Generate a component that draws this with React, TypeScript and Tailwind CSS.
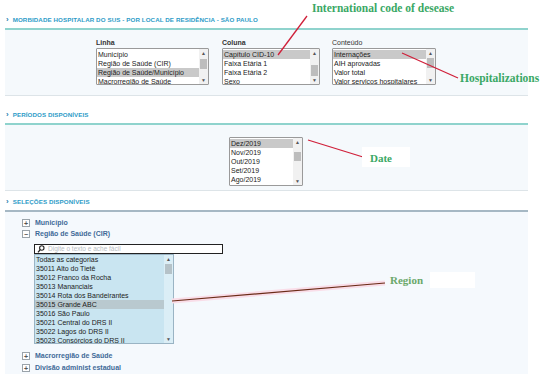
import React from 'react';

type ListProps = {
  items: string[];
  selected?: number;
  className: string;
  thumb: string;
  rowH?: string;
};

const ListBox: React.FC<ListProps> = ({ items, selected, className, thumb, rowH = 'h-[9px]' }) => {
  return (
    <div className={`flex overflow-hidden border border-[#9a9a9a] bg-white rounded-[1px] ${className}`}>
      <div className="flex-1 overflow-hidden pt-[1px]">
        {items.map((it, i) => (
          <div
            key={it}
            className={`${rowH} pl-[1px] leading-[9px] whitespace-nowrap ${i === selected ? 'bg-[#c9c9c9]' : ''}`}
          >
            {it}
          </div>
        ))}
      </div>
      <div className="relative w-[9px] bg-[#f1f1f1] flex flex-col items-center justify-between">
        <span className="text-[5px] leading-[8px] text-[#555]">▲</span>
        <span className="text-[5px] leading-[8px] text-[#555]">▼</span>
        <div className={`absolute left-[1px] w-[7px] bg-[#bdbdbd] ${thumb}`} />
      </div>
    </div>
  );
};

const SectionHeader: React.FC<{ title: string; h: string; line: string }> = ({ title, h, line }) => (
  <div className={`flex items-end pb-[4px] pl-[1px] border-b-2 ${h} ${line}`}>
    <span className="text-[#2a7fb0] font-bold text-[8px] leading-[8px] mr-[4px]">›</span>
    <span className="text-[#2e9cc8] font-bold text-[6.2px] leading-[8px] tracking-[0.1px]">{title}</span>
  </div>
);

const TreeBox: React.FC<{ sign: string }> = ({ sign }) => (
  <span className="w-[8px] h-[8px] border border-[#9aa3aa] bg-white flex items-center justify-center text-[7px] leading-[7px] text-[#555] mr-[5px]">
    {sign}
  </span>
);

export default function App() {
  const regioes = [
    'Todas as categorias',
    '35011 Alto do Tietê',
    '35012 Franco da Rocha',
    '35013 Mananciais',
    '35014 Rota dos Bandeirantes',
    '35015 Grande ABC',
    '35016 São Paulo',
    '35021 Central do DRS II',
    '35022 Lagos do DRS II',
    '35023 Consórcios do DRS II',
  ];

  return (
    <div className="relative w-[550px] h-[375px] overflow-hidden bg-white text-[7px] text-[#222] font-['Liberation_Sans',Arial,sans-serif]">
      <div className="pl-[5px] pr-[22px] flex flex-col">
        <SectionHeader
          title="MORBIDADE HOSPITALAR DO SUS - POR LOCAL DE RESIDÊNCIA - SÃO PAULO"
          h="h-[30px]"
          line="border-[#8fd3cd]"
        />
        <div className="h-[66px] bg-[#f5f9fc] border-b border-[#dde4e8] flex pl-[91px] pt-[8px] gap-[13px]">
          <div className="flex flex-col">
            <span className="font-bold text-[#333] leading-[10px] h-[10px]">Linha</span>
            <ListBox
              items={['Município', 'Região de Saúde (CIR)', 'Região de Saúde/Município', 'Macrorregião de Saúde']}
              selected={2}
              className="w-[113px] h-[37px]"
              thumb="top-[10px] h-[10px]"
            />
          </div>
          <div className="flex flex-col">
            <span className="font-bold text-[#333] leading-[10px] h-[10px]">Coluna</span>
            <ListBox
              items={['Capítulo CID-10', 'Faixa Etária 1', 'Faixa Etária 2', 'Sexo']}
              selected={0}
              className="w-[98px] h-[37px]"
              thumb="top-[16px] h-[11px]"
            />
          </div>
          <div className="flex flex-col ml-[-1px]">
            <span className="text-[#333] leading-[10px] h-[10px]">Conteúdo</span>
            <ListBox
              items={['Internações', 'AIH aprovadas', 'Valor total', 'Valor serviços hospitalares']}
              selected={0}
              className="w-[104px] h-[37px]"
              thumb="top-[9px] h-[10px]"
            />
          </div>
        </div>

        <SectionHeader title="PERÍODOS DISPONÍVEIS" h="h-[29px]" line="border-[#8fd3cd]" />
        <div className="h-[66px] bg-[#f5f9fc] border-b border-[#dde4e8] flex pl-[224px] pt-[12px]">
          <ListBox
            items={['Dez/2019', 'Nov/2019', 'Out/2019', 'Set/2019', 'Ago/2019']}
            selected={0}
            className="w-[74px] h-[49px]"
            thumb="top-[14px] h-[9px]"
          />
        </div>

        <SectionHeader title="SELEÇÕES DISPONÍVEIS" h="h-[21px]" line="border-[#a6b8c4]" />
        <div className="h-[162px] bg-[#f5f9fd] pl-[17px] pt-[6px] flex flex-col">
          <div className="flex items-center h-[11px] text-[#3f6a98] font-bold">
            <TreeBox sign="+" />
            Município
          </div>
          <div className="flex items-center h-[11px] text-[#3f6a98] font-bold">
            <TreeBox sign="−" />
            Região de Saúde (CIR)
          </div>
          <div className="ml-[12px] mt-[4px] w-[189px] h-[10px] border border-[#222] bg-white flex items-center pl-[2px]">
            <svg width="8" height="8" viewBox="0 0 8 8" className="mr-[3px]">
              <circle cx="4.8" cy="3" r="2.2" fill="none" stroke="#222" strokeWidth="1.1" />
              <line x1="3.2" y1="4.6" x2="1" y2="7.4" stroke="#222" strokeWidth="1.3" />
            </svg>
            <span className="text-[#b8bec4] text-[6.5px] leading-[8px]">Digite o texto e ache fácil</span>
          </div>
          <div className="ml-[12px] w-[140px] h-[91px] border border-[#9ab4c4] bg-[#c9e5f1] flex overflow-hidden">
            <div className="flex-1 overflow-hidden">
              {regioes.map((r, i) => (
                <div
                  key={r}
                  className={`h-[9px] leading-[9px] pl-[1px] whitespace-nowrap ${i === 5 ? 'bg-[#b9c9cf]' : ''}`}
                >
                  {r}
                </div>
              ))}
            </div>
            <div className="relative w-[9px] bg-[#dbeef6] flex flex-col items-center justify-between">
              <span className="text-[5px] leading-[8px] text-[#555]">▲</span>
              <span className="text-[5px] leading-[8px] text-[#555]">▼</span>
              <div className="absolute left-[1px] top-[9px] w-[7px] h-[10px] bg-[#b5c2c8]" />
            </div>
          </div>
          <div className="flex items-center h-[12px] mt-[6px] text-[#3f6a98] font-bold">
            <TreeBox sign="+" />
            Macrorregião de Saúde
          </div>
          <div className="flex items-center h-[12px] text-[#3f6a98] font-bold">
            <TreeBox sign="+" />
            Divisão administ estadual
          </div>
        </div>
      </div>

      {/* annotations drawn over the screenshot */}
      <svg className="absolute inset-0 pointer-events-none" width="550" height="375">
        <line x1="307" y1="16" x2="278" y2="55" stroke="#d0203a" strokeWidth="1.3" />
        <line x1="402" y1="53" x2="458" y2="78" stroke="#d0203a" strokeWidth="1.3" />
        <line x1="308" y1="140" x2="363" y2="157" stroke="#d0203a" strokeWidth="1.3" />
        <line x1="172" y1="301" x2="385" y2="283" stroke="#f9dde8" strokeWidth="5" />
        <line x1="172" y1="301" x2="385" y2="283" stroke="#6b2c18" strokeWidth="1.2" />
      </svg>
      <div className="absolute left-[312px] top-[0px] text-[#3aa865] font-bold text-[11.5px] font-['Liberation_Serif',serif]">
        International code of desease
      </div>
      <div className="absolute left-[460px] top-[70px] text-[#3aa865] font-bold text-[11.5px] font-['Liberation_Serif',serif]">
        Hospitalizations
      </div>
      <div className="absolute left-[362px] top-[147px] w-[48px] h-[20px] bg-white pl-[8px] pt-[3px] text-[#3aa865] font-bold text-[11px] font-['Liberation_Serif',serif]">
        Date
      </div>
      <div className="absolute left-[388px] top-[272px] w-[88px] h-[16px] pl-[2px] text-[#6aa86a] font-bold text-[11px] font-['Liberation_Serif',serif]">
        <span className="bg-[#f5f9fd]">Region</span>
      </div>
      <div className="absolute left-[430px] top-[272px] w-[45px] h-[16px] bg-white" />
    </div>
  );
}
